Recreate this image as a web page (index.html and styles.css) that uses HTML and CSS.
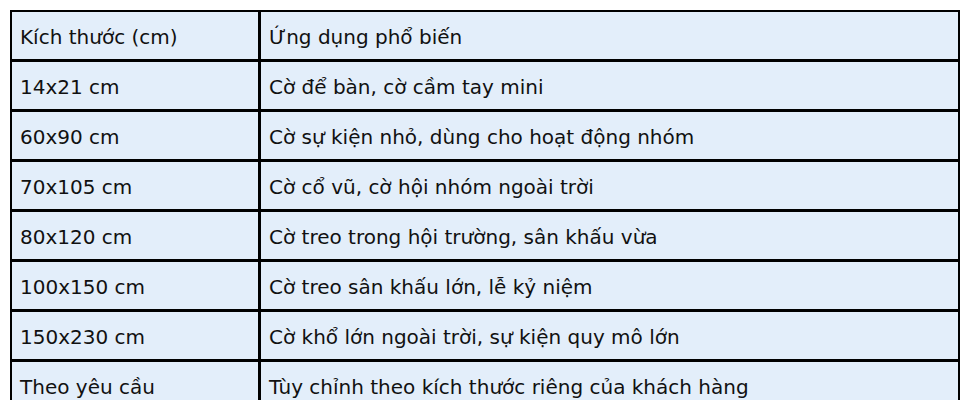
FILE: index.html
```html
<!DOCTYPE html>
<html lang="vi">
<head>
<meta charset="utf-8">
<link rel="stylesheet" href="styles.css">
</head>
<body>
<table class="sizes">
  <tr><td class="c1">Kích thước (cm)</td><td class="c2">Ứng dụng phổ biến</td></tr>
  <tr><td class="c1">14x21 cm</td><td class="c2">Cờ để bàn, cờ cầm tay mini</td></tr>
  <tr><td class="c1">60x90 cm</td><td class="c2">Cờ sự kiện nhỏ, dùng cho hoạt động nhóm</td></tr>
  <tr><td class="c1">70x105 cm</td><td class="c2">Cờ cổ vũ, cờ hội nhóm ngoài trời</td></tr>
  <tr><td class="c1">80x120 cm</td><td class="c2">Cờ treo trong hội trường, sân khấu vừa</td></tr>
  <tr><td class="c1">100x150 cm</td><td class="c2">Cờ treo sân khấu lớn, lễ kỷ niệm</td></tr>
  <tr><td class="c1">150x230 cm</td><td class="c2">Cờ khổ lớn ngoài trời, sự kiện quy mô lớn</td></tr>
  <tr><td class="c1">Theo yêu cầu</td><td class="c2">Tùy chỉnh theo kích thước riêng của khách hàng</td></tr>
</table>
</body>
</html>
```
FILE: styles.css
```css
html, body {
  margin: 0;
  padding: 0;
  background: #ffffff;
}
body {
  padding: 10px 0 0 10px;
  font-family: "DejaVu Sans", sans-serif;
  font-size: 20px;
  color: #111111;
}
.sizes {
  border-collapse: separate;
  border-spacing: 0;
  width: 950px;
  table-layout: fixed;
  border-top: 2px solid #000;
  border-left: 2px solid #000;
  border-right: 2px solid #000;
  background: #e3eefa;
}
.sizes td {
  padding: 14px 8px 10px 8px;
  line-height: 23px;
  height: 23px;
  border-bottom: 3px solid #000;
  white-space: nowrap;
  vertical-align: middle;
}
.sizes .c1 {
  width: 230px;
  border-right: 3px solid #000;
}
```
